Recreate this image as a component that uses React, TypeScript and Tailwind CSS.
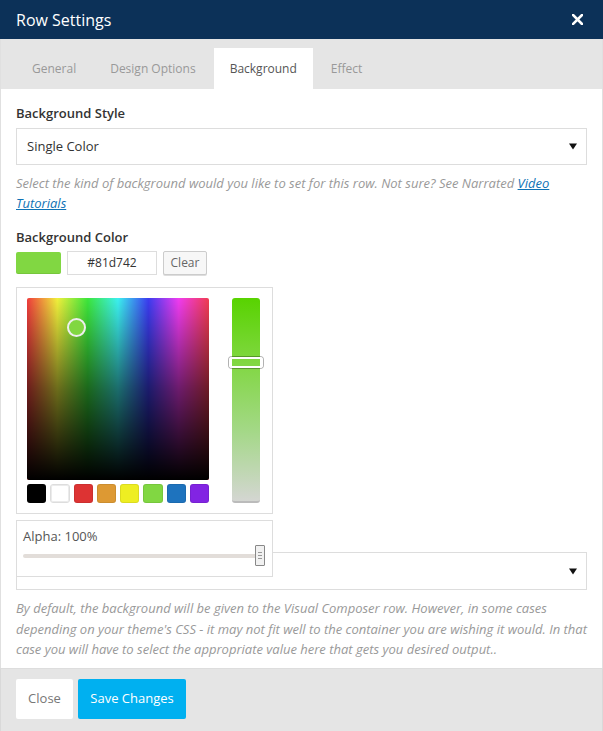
const swatches = ["#000000", "#ffffff", "#dd3333", "#dd9933", "#eeee22", "#81d742", "#1e73be", "#8224e3"];

const tabs = ["General", "Design Options", "Background", "Effect"];

function Arrow() {
    return (
        <svg width="8" height="7" viewBox="0 0 8 7" className="shrink-0">
            <path d="M0 0.5h8L4 6.5z" fill="#111" />
        </svg>
    );
}

export default function App() {
    return (
        <div className="w-[603px] h-[731px] flex flex-col font-['Open_Sans',sans-serif] text-[13px] text-[#333] bg-white">
            <header className="h-[39px] shrink-0 bg-[#0c3158] flex items-center justify-between pl-4 pr-[20px]">
                <h1 className="text-[16px] text-white leading-none">Row Settings</h1>
                <svg width="11" height="11" viewBox="0 0 11 11">
                    <path d="M1 1l9 9M10 1l-9 9" stroke="#fff" strokeWidth="2.6" strokeLinecap="square" />
                </svg>
            </header>

            <nav className="h-[50px] shrink-0 bg-[#e5e5e5] flex items-end gap-[2px] pl-[15px] border-x border-[#e0e0e0]">
                {tabs.map((t) => (
                    <div
                        key={t}
                        className={`h-[41px] px-4 flex items-center pt-[1px] text-[12px] ${t === "Background" ? "bg-white text-[#555]" : "text-[#999]"}`}
                    >
                        {t}
                    </div>
                ))}
            </nav>

            <main className="flex-1 border-x border-[#e0e0e0] px-[15px] pt-[15px]">
                <label className="block font-semibold leading-[18px] text-[#333]">Background Style</label>
                <div className="mt-[6px] h-[37px] border border-[#ddd] flex items-center justify-between pl-[10px] pr-[9px]">
                    <span>Single Color</span>
                    <Arrow />
                </div>
                <p className="mt-[8px] italic text-[#999] leading-[20px]">
                    Select the kind of background would you like to set for this row. Not sure? See Narrated{" "}
                    <a className="text-[#0e72b5] underline">Video Tutorials</a>
                </p>

                <label className="block mt-[15px] font-semibold leading-[18px] text-[#333]">Background Color</label>
                <div className="relative mt-[5px]">
                    <div className="flex items-center gap-[6px] h-[24px]">
                        <div className="w-[45px] h-[22px] rounded-[2px] bg-[#81d742] shadow-[inset_0_-1px_0_rgba(0,0,0,0.08)]" />
                        <div className="w-[90px] h-[24px] border border-[#ddd] flex items-center justify-center text-[12px] text-[#333]">#81d742</div>
                        <div className="w-[44px] h-[24px] border border-[#ccc] bg-[#f7f7f7] rounded-[2px] flex items-center justify-center text-[12px] text-[#666] shadow-[0_1px_0_#ddd]">Clear</div>
                    </div>

                    <div className="absolute left-0 top-[36px] z-10 flex flex-col gap-[6px]">
                        <div className="w-[257px] h-[227px] bg-white border border-[#ddd] p-[10px] flex gap-[23px]">
                            <div className="w-[182px] flex flex-col gap-[4px]">
                                <div className="relative h-[183px] rounded-[2px] bg-[linear-gradient(to_right,#f03c3c,#f0f03c,#3ce63c,#3cf0f0,#3c3cf0,#f03cf0,#f03c50)]">
                                    <div className="absolute inset-0 rounded-[2px] bg-[linear-gradient(to_bottom,rgba(0,0,0,0)_0%,rgba(0,0,0,0.55)_50%,#000_100%)]" />
                                    <div className="absolute left-[40px] top-[20px] w-[19px] h-[19px] rounded-full border-2 border-[#eee] bg-[#81d742]" />
                                </div>
                                <div className="flex gap-[4px]">
                                    {swatches.map((c) => (
                                        <div
                                            key={c}
                                            className={`w-[19.25px] h-[19px] rounded-[3px] shadow-[inset_0_0_0_1px_rgba(0,0,0,0.08)] ${c === "#ffffff" ? "border border-[#ddd]" : ""}`}
                                            style={{ backgroundColor: c }}
                                        />
                                    ))}
                                </div>
                            </div>
                            <div className="relative w-[28px] h-[205px] rounded-[3px] border-b-2 border-[#bbb] bg-[linear-gradient(to_bottom,#58d300_0%,#81d742_32%,#a3d886_65%,#d4d6d2_100%)]">
                                <div className="absolute -left-[3px] -right-[3px] top-[59px] h-[11px] rounded-[3px] border-2 border-white shadow-[0_0_0_1px_rgba(0,0,0,0.3)]" />
                            </div>
                        </div>

                        <div className="w-[257px] h-[57px] bg-white border border-[#ddd] px-[6px] pt-[6px]">
                            <div className="text-[#555] leading-[18px]">Alpha: 100%</div>
                            <div className="relative mt-[9px] h-[4px] w-[236px] bg-[#e2ddd9] rounded-full">
                                <div className="absolute left-[232px] -top-[9px] w-[10px] h-[21px] bg-[#f1f1f1] border border-[#888] rounded-[1px] flex flex-col items-center justify-center gap-[2px]">
                                    <span className="block w-[4px] h-px bg-[#999]" />
                                    <span className="block w-[4px] h-px bg-[#999]" />
                                    <span className="block w-[4px] h-px bg-[#999]" />
                                </div>
                            </div>
                        </div>
                    </div>
                </div>

                <div className="mt-[277px] h-[38px] border border-[#ddd] flex items-center justify-end pr-[9px]">
                    <Arrow />
                </div>
                <p className="mt-[8px] italic text-[#999] leading-[20.5px]">
                    By default, the background will be given to the Visual Composer row. However, in some cases depending on your theme's CSS - it may not fit well to the container you are wishing it would. In that case you will have to select the appropriate value here that gets you desired output..
                </p>
            </main>

            <footer className="h-[63px] shrink-0 bg-[#e5e5e5] border-t border-[#ddd] border-x border-x-[#d9d9d9] flex items-start gap-[5px] pl-[15px] pt-[10px]">
                <button className="h-[40px] w-[57px] bg-white rounded-[2px] text-[#777] text-[13px]">Close</button>
                <button className="h-[40px] w-[108px] bg-[#00b0f0] rounded-[2px] text-white text-[13px]">Save Changes</button>
            </footer>
        </div>
    );
}
